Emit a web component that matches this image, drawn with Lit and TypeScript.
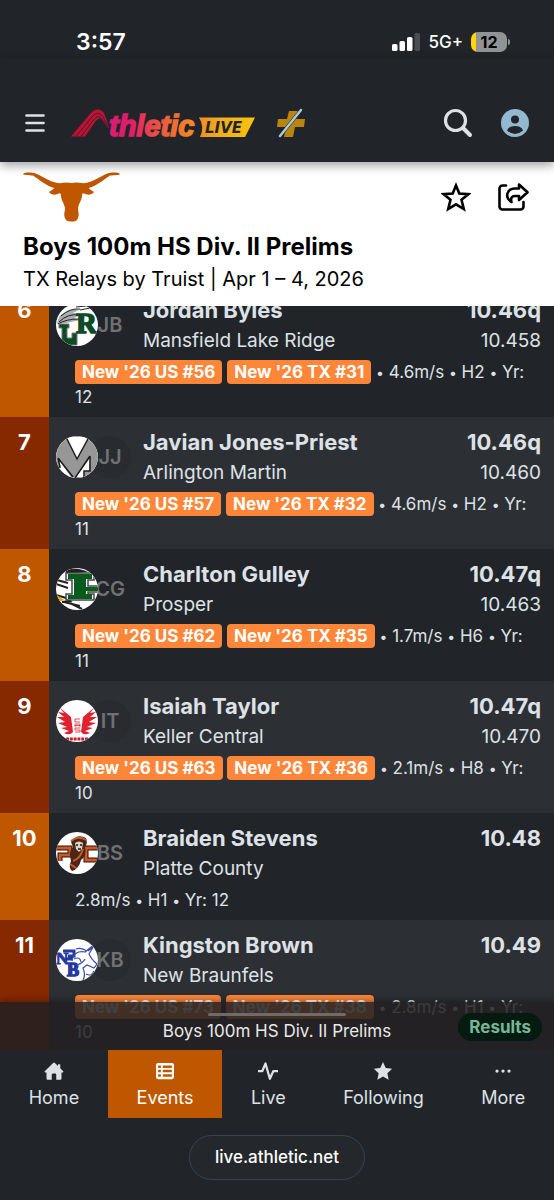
import { LitElement, html, css, svg, nothing } from "lit";
import { customElement, property, query } from "lit/decorators.js";
import { classMap } from "lit/directives/class-map.js";

interface Result {
  place: number;
  name: string;
  school: string;
  initials: string;
  crest: string;
  mark: string;
  exact?: string;
  badges: string[];
  wind: string;
  heat: string;
  year: string;
}

const RESULTS: Result[] = [
  { place: 6, name: "Jordan Byles", school: "Mansfield Lake Ridge", initials: "JB", crest: "lakeRidge", mark: "10.46q", exact: "10.458", badges: ["New '26 US #56", "New '26 TX #31"], wind: "4.6m/s", heat: "H2", year: "12" },
  { place: 7, name: "Javian Jones-Priest", school: "Arlington Martin", initials: "JJ", crest: "martin", mark: "10.46q", exact: "10.460", badges: ["New '26 US #57", "New '26 TX #32"], wind: "4.6m/s", heat: "H2", year: "11" },
  { place: 8, name: "Charlton Gulley", school: "Prosper", initials: "CG", crest: "prosper", mark: "10.47q", exact: "10.463", badges: ["New '26 US #62", "New '26 TX #35"], wind: "1.7m/s", heat: "H6", year: "11" },
  { place: 9, name: "Isaiah Taylor", school: "Keller Central", initials: "IT", crest: "keller", mark: "10.47q", exact: "10.470", badges: ["New '26 US #63", "New '26 TX #36"], wind: "2.1m/s", heat: "H8", year: "10" },
  { place: 10, name: "Braiden Stevens", school: "Platte County", initials: "BS", crest: "platte", mark: "10.48", badges: [], wind: "2.8m/s", heat: "H1", year: "12" },
  { place: 11, name: "Kingston Brown", school: "New Braunfels", initials: "KB", crest: "braunfels", mark: "10.49", badges: ["New '26 US #73", "New '26 TX #38"], wind: "2.8m/s", heat: "H1", year: "10" },
];

/* School crests, each drawn on a 42-unit square and clipped to a circle. */
const CRESTS: Record<string, unknown> = {
  lakeRidge: svg`
    <path d="M3 13 Q12 3 23 6 L17 9 L26 10 L18 14 L25 16 L10 19 L1 20Z" fill="#a9adaf"/>
    <path d="M5 12 Q14 4 24 5 M3 18 Q12 9 24 11 M2 20 Q10 15 23 15 M20 3 L30 2 M24 6 L34 4" fill="none" stroke="#222" stroke-width="1"/>
    <path d="M3 20 h10 v4 h-2 v10 h5 v-5 h5 v12 H4 v-4 h2 V24 H3z" fill="#0d4b26" stroke="#777" stroke-width="1"/>
    <text x="20" y="29" font-family="Liberation Serif, serif" font-weight="700" font-size="29" fill="#0d4b26" stroke="#0d4b26" stroke-width="1.500">R</text>`,
  martin: svg`
    <rect width="42" height="42" fill="#979797"/>
    <path d="M10 1 H33 L21 23Z M3 24 L15 41 H5Z M34 22 L33 35 H28 V41 H20Z" fill="#fff"/>
    <path d="M10 1 L21 23 L33 1 M2 22 L17 41 M34 20 L19 42 M34 20 V35 H28 V41 M2 22 L4 31 H1" fill="none" stroke="#1c1c1c" stroke-width="1.500"/>`,
  prosper: svg`
    <path d="M0 16 L12 20 M1 12 L12 15 M0 27 L10 30 L14 33 L6 34 M14 35 L26 41 M8 34 L24 38" stroke="#222" stroke-width="2" fill="none"/>
    <path d="M10 2 Q20 -2 32 4 L10 6Z" fill="#222"/>
    <path d="M1 27 L8 32 L3 34Z" fill="#e9a400"/>
    <path d="M10 5 H38 V12 H32 V18 H42 V24 H32 V26 H38 V32 H10 V26 H16 V12 H10Z" fill="#fff" stroke="#444" stroke-width="1.500"/>
    <path d="M12 6 H36 V11 H30 V19 H42 V23 H30 V26 H36 V31 H12 V27 H18 V11 H12Z" fill="#075b1d"/>`,
  keller: svg`
    <path d="M3 7 L15 17 L17 32 Q14 36 8 33 L13 31 L5 28 L11 27 L2 23 L9 22 L1 17 L8 17 L2 12 L8 13Z" fill="#e0222e"/>
    <path d="M39 7 L27 17 L25 32 Q28 36 34 33 L29 31 L37 28 L31 27 L40 23 L33 22 L41 17 L34 17 L40 12 L34 13Z" fill="#e0222e"/>
    <path d="M24 19 h-5 v3 h5 M19 27 v-3 h5 v3 M19 25.500 h5 M24 28 h-5 v2 h5 v2 h-5" fill="none" stroke="#e0222e" stroke-width=".8"/>
    <path d="M10 39 h22" stroke="#c3202b" stroke-width="3" stroke-dasharray="3 .8"/>`,
  platte: svg`
    <path d="M0 16 H14 V23 H4 V29 M42 16 H30 V28 H42" fill="none" stroke="#1d1713" stroke-width="5"/>
    <path d="M0 16 H14 V23 H4 V29 M42 16 H30 V28 H42" fill="none" stroke="#d5551d" stroke-width="3"/>
    <path d="M15 10 Q21 1 30 6 Q32 12 29 15 Q31 24 25 28 Q23 37 16 39 Q12 36 15 29 Q12 19 17 15Z" fill="#4a2718"/>
    <path d="M15 9 Q22 3 30 8 M17 29 Q24 27 27 17 M14 32 L20 36" fill="none" stroke="#c65b28" stroke-width="2"/>
    <path d="M19 11 Q23 8 27 11 L26 17 L23 20 L20 17Z" fill="#ddd2c4"/>
    <path d="M20 13 h2 M24 13 h2 M22 17 h3" stroke="#201510" stroke-width="1.300"/>`,
  braunfels: svg`
    <text x="0" y="25" font-family="Liberation Serif, serif" font-weight="700" font-size="17" fill="#27389f" stroke="#27389f" stroke-width="1">N</text>
    <text x="11" y="37" font-family="Liberation Serif, serif" font-weight="700" font-size="18" fill="#27389f" stroke="#27389f" stroke-width="1.500">B</text>
    <path d="M7 12 H18 V17 H12 M9 20 H17" stroke="#27389f" stroke-width="3" fill="none"/>
    <path d="M16 22 Q18 11 29 13 L39 5 L33 15 Q35 20 41 25 L38 29 L31 26 L27 29 Q30 36 27 41 M20 10 Q25 8 31 12 M32 12 L37 8 M18 20 Q24 17 25 23 M21 26 Q27 24 29 20 M30 35 Q36 38 38 32" fill="none" stroke="#3c4da8" stroke-width="1.200"/>`,
};

@customElement("result-row")
class ResultRow extends LitElement {
  @property({ attribute: false }) result!: Result;

  static styles = css`
    :host { display: grid; grid-template-columns: 49px 1fr; background: #212529; color: #dee2e6; }
    :host(.alt) { background: #2c3034; }
    .place { background: #bf5700; color: #fff; font-size: 22px; line-height: 30px; font-weight: 700; text-align: center; padding-top: 10px; }
    :host(.alt) .place { background: #862900; }
    .body { padding: 10px 13px 7px 7px; min-width: 0; }
    .head { display: flex; }
    .avatars { display: flex; flex: none; width: 87px; padding-top: 9px; height: 42px; }
    .crest { width: 42px; height: 42px; border-radius: 50%; background: #fff; z-index: 1; flex: none; }
    .initials { width: 42px; height: 42px; margin-left: -9px; border-radius: 50%; background: #212529; color: #707173; font-size: 20px; line-height: 42px; font-weight: 600; text-align: center; flex: none; }
    :host(.alt) .initials { background: #282c30; }
    .who { flex: 1; min-width: 0; }
    .name, .mark { font-size: 22px; line-height: 30px; font-weight: 700; white-space: nowrap; }
    .school, .exact { font-size: 19px; line-height: 32px; white-space: nowrap; }
    .times { text-align: right; }
    .meta { padding: 3px 10px 0 19px; font-size: 17px; line-height: 25px; }
    .dot { font-size: 14px; line-height: 14px; }
    .badge { display: inline-block; background: #fd8639; color: #fff; border-radius: 4px; font-weight: 700; font-size: 17px; line-height: 24px; padding: 0 7px; vertical-align: top; white-space: nowrap; }
  `;

  render() {
    const r = this.result;
    const dot = html`<span class="dot">•</span>`;
    return html`
      <div class="place">${r.place}</div>
      <div class="body">
        <div class="head">
          <div class="avatars">
            <svg class="crest" viewBox="0 0 42 42" aria-hidden="true">
              <clipPath id="round"><circle cx="21" cy="21" r="21" /></clipPath>
              <g clip-path="url(#round)">${CRESTS[r.crest]}</g>
            </svg>
            <div class="initials">${r.initials}</div>
          </div>
          <div class="who">
            <div class="name">${r.name}</div>
            <div class="school">${r.school}</div>
          </div>
          <div class="times">
            <div class="mark">${r.mark}</div>
            ${r.exact ? html`<div class="exact">${r.exact}</div>` : nothing}
          </div>
        </div>
        <div class="meta">
          ${r.badges.map((b) => html`<span class="badge">${b}</span> `)}${r.badges.length ? html`${dot} ` : nothing}${r.wind} ${dot} ${r.heat} ${dot} Yr: ${r.year}
        </div>
      </div>
    `;
  }
}

const NAV = [
  { label: "Home", icon: svg`<path d="M8.700 1.500a1 1 0 0 0-1.400 0L.6 8.100a.6.600 0 0 0 .4 1H2V14a1 1 0 0 0 1 1h3.200v-4a1 1 0 0 1 1-1h1.600a1 1 0 0 1 1 1v4H13a1 1 0 0 0 1-1V9.100h1a.6.600 0 0 0 .4-1L13 5.700V2.500h-1.800v1.500z"/>` },
  { label: "Events", icon: svg`<path fill-rule="evenodd" d="M2.500 1.500h11a1.700 1.700 0 0 1 1.700 1.700v9.600a1.700 1.700 0 0 1-1.700 1.700h-11a1.700 1.700 0 0 1-1.700-1.700V3.200a1.700 1.700 0 0 1 1.700-1.700zM2.500 3.500v2h2.200v-2zM6.200 3.500v2h7.300v-2zM2.500 7v2h2.200V7zM6.200 7v2h7.300V7zM2.500 10.500v2h2.200v-2zM6.200 10.500v2h7.300v-2z"/>`, active: true },
  { label: "Live", icon: svg`<path d="M0 8H3.500L6 2L9.500 14.200L12.300 8H16" fill="none" stroke="currentColor" stroke-width="1.800" stroke-linejoin="round" stroke-linecap="round"/>` },
  { label: "Following", icon: svg`<path d="M8 .8l2.200 4.800 5.100.6-3.800 3.500 1 5.200L8 12.300l-4.500 2.600 1-5.200L.7 6.200l5.100-.6z"/>` },
  { label: "More", icon: svg`<circle cx="3.200" cy="8" r="1.300"/><circle cx="8" cy="8" r="1.300"/><circle cx="12.800" cy="8" r="1.300"/>` },
];

@customElement("app-root")
class AppRoot extends LitElement {
  @query(".scroller") scroller!: HTMLElement;

  static styles = css`
    :host { display: flex; flex-direction: column; height: 100vh; background: #212529; color: #dee2e6; font-family: Inter, "Liberation Sans", sans-serif; overflow: hidden; }
    button, a { font: inherit; color: inherit; text-decoration: none; }
    button { display: flex; align-items: center; justify-content: center; padding: 0; border: 0; background: none; }
    svg { display: block; }
    .status { display: flex; align-items: center; padding: 26px 44px 0 76px; color: #fff; font-weight: 600; line-height: 32px; }
    .clock { font-size: 23px; flex: 1; }
    .signal { margin-right: 8px; }
    .network { font-size: 17px; font-weight: 500; margin-right: 8px; }
    .battery { display: flex; align-items: center; gap: 1px; }
    .cell { width: 36px; height: 20px; border-radius: 7px; background: linear-gradient(90deg, #ffd60a 5px, #929395 5px); color: #000; font-size: 16px; line-height: 20px; font-weight: 700; text-align: center; }
    .tip { width: 2px; height: 6px; border-radius: 0 2px 2px 0; background: #929395; }
    .topbar { display: flex; align-items: center; padding: 33px 25px 7px; height: 64px; box-shadow: 0 3px 10px rgba(0, 0, 0, 0.4); z-index: 2; }
    .brand { display: block; margin-left: 26px; }
    .plus { margin-left: 21px; }
    .search { margin-left: auto; }
    .account { margin-left: 28px; }
    .event { background: #fff; color: #000; padding: 10px 25px 11px 23px; z-index: 1; }
    .event-top { display: flex; justify-content: space-between; align-items: center; }
    .actions { display: flex; gap: 26px; }
    h1 { margin: 9px 0 0; font-size: 24px; line-height: 32px; font-weight: 700; }
    .meet { margin: 0; font-size: 20px; line-height: 32px; }
    main { position: relative; flex: 1; min-height: 0; }
    .scroller { height: 100%; overflow-y: auto; scrollbar-width: none; }
    .list { padding-bottom: 48px; }
    .sheet { position: absolute; inset: auto 0 0 0; height: 48px; background: rgba(34, 31, 33, 0.86); box-shadow: 0 -1px 8px rgba(0, 0, 0, 0.4); display: grid; grid-template-columns: 1fr auto 1fr; align-items: center; }
    .handle { position: absolute; top: 11px; left: 50%; width: 138px; height: 3px; margin-left: -69px; border-radius: 2px; background: #6f6b6b; }
    .sheet-title { grid-column: 2; font-size: 17px; line-height: 24px; padding-top: 10px; color: #e9e9ea; }
    .pill { justify-self: end; margin: 2px 12px 0 0; padding: 0 11px; border-radius: 14px; background: #051b11; color: #75b798; font-size: 17px; line-height: 28px; font-weight: 700; }
    nav { display: flex; background: #212529; z-index: 1; }
    .tab { flex: 1 1 auto; display: flex; flex-direction: column; align-items: center; gap: 1px; padding: 11px 0 5px; font-size: 18px; line-height: 31px; }
    .tab.active { background: #bf5700; color: #fff; }
    .browser { display: flex; justify-content: center; padding: 17px 0 20px; }
    .address { border: 1px solid #3b4148; border-radius: 23px; padding: 0 25px; background: #24282c; color: #fff; font-size: 17px; line-height: 43px; font-weight: 500; }
  `;

  firstUpdated() {
    requestAnimationFrame(() => { this.scroller.scrollTop = 21; });
  }

  render() {
    return html`
      <div class="status">
        <span class="clock">3:57</span>
        <svg class="signal" width="28" height="18" viewBox="0 0 28 18" fill="#fff" aria-hidden="true">
          <rect x="0" y="11" width="5.500" height="7" rx="1.600" /><rect x="7.500" y="8" width="5.500" height="10" rx="1.600" />
          <rect x="15" y="4" width="5.500" height="14" rx="1.600" /><rect x="22.500" y="0" width="5.500" height="18" rx="1.600" fill="#4b4e52" />
        </svg>
        <span class="network">5G+</span>
        <span class="battery"><span class="cell">12</span><span class="tip"></span></span>
      </div>
      <header class="topbar">
        <button aria-label="Menu">
          <svg width="20" height="18" viewBox="0 0 20 18" stroke="#dee2e6" stroke-width="2.600" stroke-linecap="round"><path d="M1.500 1.500H18.500M1.500 9H18.500M1.500 16.500H18.500" /></svg>
        </button>
        <a class="brand" href="#" aria-label="AthleticLIVE">
          <svg width="185" height="38" viewBox="0 -4 185 38">
            <defs>
              <linearGradient id="word" gradientUnits="userSpaceOnUse" x1="38" y1="0" x2="130" y2="0">
                <stop offset="0" stop-color="#d91c72" /><stop offset=".25" stop-color="#e01e68" /><stop offset=".45" stop-color="#e8464d" /><stop offset=".7" stop-color="#ee6d33" /><stop offset="1" stop-color="#f4951f" />
              </linearGradient>
              <linearGradient id="flag"><stop offset="0" stop-color="#ee8f20" /><stop offset=".4" stop-color="#f3ae1b" /><stop offset="1" stop-color="#f8c30d" /></linearGradient>
            </defs>
            <path d="M0 28.500 L19 6 Q25 -1 31 3 Q34 5 38 20 L36 20 Q31 10 28 10.500 Q26 11 24 14 L14 28.500Z" fill="#bd1236" />
            <path d="M5 28.500 L21 9 Q26 3 30 6.500 Q33 9 37 20 M10 28.500 L23 11.500 Q27 6.500 30 10 Q33 13 36 20" fill="none" stroke="#212529" stroke-width=".8" />
            <text x="38" y="28" font-family="Liberation Sans, sans-serif" font-size="29" font-weight="700" font-style="italic" fill="url(#word)" stroke="url(#word)" stroke-width="1.500">thletic</text>
            <path d="M128 9.500 H184 L174 29 H129 Q134 19 128 9.500Z" fill="url(#flag)" />
            <text x="134" y="25" font-family="DejaVu Sans, sans-serif" font-size="15" font-weight="700" font-style="italic" fill="#212529">LIVE</text>
          </svg>
        </a>
        <svg class="plus" width="28" height="30" viewBox="0 0 28 30" aria-hidden="true">
          <path d="M12 3h9l-2 8h9l-1 8h-9l-2 10H7l2-10H0l1-8h9z" fill="#b8860f" />
          <path d="M3 28L24 2" stroke="#212529" stroke-width="3.500" /><path d="M3 28L24 2" stroke="#a9cbdc" stroke-width="2.500" stroke-linecap="round" />
        </svg>
        <button class="search" aria-label="Search">
          <svg width="30" height="30" viewBox="0 0 30 30" fill="none" stroke="#dee2e6" stroke-linecap="round"><circle cx="12.500" cy="12.500" r="10" stroke-width="3.200" /><path d="M20 20L27 27" stroke-width="4" /></svg>
        </button>
        <button class="account" aria-label="Account">
          <svg width="28" height="28" viewBox="0 0 28 28"><circle cx="14" cy="14" r="14" fill="#93b8d0" /><circle cx="14" cy="10.500" r="4" fill="#212529" /><path d="M6 21.500Q7.500 17 14 17t8 4.500Q18 25 14 25T6 21.500Z" fill="#212529" /></svg>
        </button>
      </header>
      <section class="event">
        <div class="event-top">
          <svg width="97" height="50" viewBox="0 0 290 148" fill="#bf5700" role="img" aria-label="Texas Longhorns">
            <path d="M0 5C5 0 25 0 36 3C60 12 80 30 110 33Q128 29 145 32Q162 29 180 33C210 30 230 12 254 3C265 0 285 0 290 5C288 9 272 8 260 10C245 20 220 42 197 47C200 53 212 56 212 60C206 68 192 70 182 63L177 64C177 82 168 90 165 105C163 116 170 125 164 138C160 147 152 147 145 147C138 147 130 147 126 138C120 125 127 116 125 105C122 90 113 82 113 64L108 63C98 70 84 68 78 60C78 56 90 53 93 47C70 42 45 20 30 10C18 8 2 9 0 5Z" />
          </svg>
          <div class="actions">
            <button aria-label="Follow">
              <svg width="30" height="30" viewBox="0 0 30 30" fill="none" stroke="#000" stroke-width="2.600"><path d="M15 3.500L18.300 11.500L27.300 12.200L20.500 17.800L22.800 27L15 22.300L7.200 27L9.500 17.800L2.700 12.200L11.700 11.500Z" /></svg>
            </button>
            <button aria-label="Share">
              <svg width="32" height="30" viewBox="0 0 32 30" fill="none" stroke="#000" stroke-width="2.600" stroke-linecap="round" stroke-linejoin="round">
                <path d="M9 3.500H5.500A3 3 0 0 0 2.500 6.500V24.500A3 3 0 0 0 5.500 27.500H23.500A3 3 0 0 0 26.500 24.500V20" />
                <path d="M22 2.500L30.500 10.300L22 18V14H18C14.500 14 13.500 16.500 14.500 20C11 17.500 9.500 14.500 10.500 11.500C11.500 8 14.500 6.500 18 6.500H22Z" />
              </svg>
            </button>
          </div>
        </div>
        <h1>Boys 100m HS Div. II Prelims</h1>
        <p class="meet">TX Relays by Truist | Apr 1 – 4, 2026</p>
      </section>
      <main>
        <div class="scroller">
          <div class="list">
            ${RESULTS.map((r) => html`<result-row class=${classMap({ alt: r.place % 2 === 1 })} .result=${r}></result-row>`)}
          </div>
        </div>
        <div class="sheet">
          <span class="handle"></span>
          <span class="sheet-title">Boys 100m HS Div. II Prelims</span>
          <span class="pill">Results</span>
        </div>
      </main>
      <nav>
        ${NAV.map((n) => html`<a href="#" class=${classMap({ tab: true, active: !!n.active })}><svg width="20" height="20" viewBox="0 0 16 16" fill="currentColor" aria-hidden="true">${n.icon}</svg><span>${n.label}</span></a>`)}
      </nav>
      <div class="browser"><a class="address" href="#">live.athletic.net</a></div>
    `;
  }
}
